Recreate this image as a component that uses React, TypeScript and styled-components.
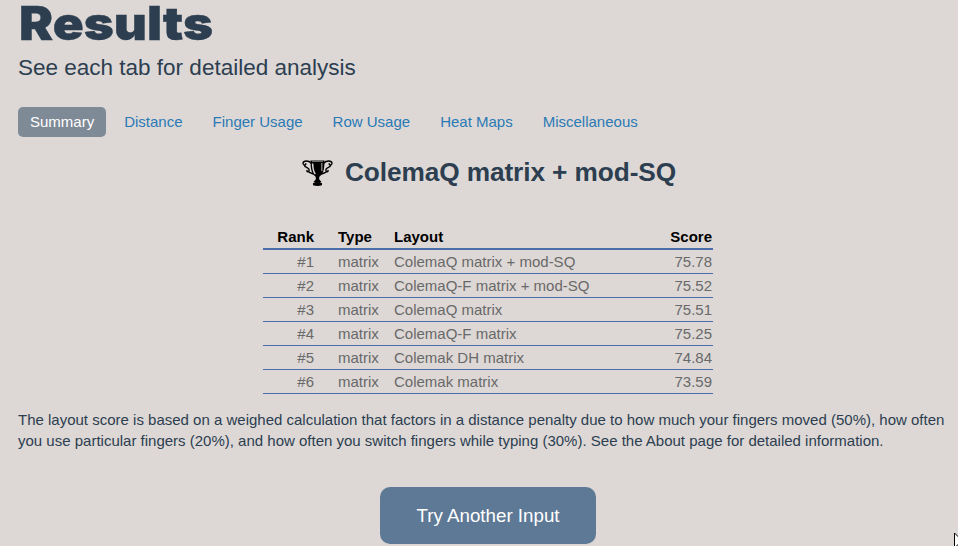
import React from "react";
import styled, { createGlobalStyle } from "styled-components";

const GlobalStyle = createGlobalStyle`
  * { box-sizing: border-box; }
  body {
    margin: 0;
    overflow: hidden;
    background: #ddd8d6;
    color: #2c3e50;
    font: 15px/21px "Liberation Sans", Arial, sans-serif;
  }
`;

const Page = styled.main`
  position: relative;
  width: 958px;
  height: 546px;
  padding: 0 10px 0 18px;
`;

const Title = styled.h1`
  width: max-content;
  margin: 0 0 0 1px;
  height: 48px;
  font-family: Inter, "Liberation Sans", sans-serif;
  font-size: 46.5px;
  font-weight: 900;
  line-height: 46px;
  transform: scaleX(1.1);
  transform-origin: left;
  -webkit-text-stroke: 0.4px #2c3e50;
`;

const Subtitle = styled.p`
  margin: 0;
  height: 59px;
  font-size: 22.5px;
  line-height: 40px;
`;

const Tabs = styled.nav`
  display: flex;
  gap: 6px;
`;

const Tab = styled.a<{ $active?: boolean }>`
  height: 30px;
  padding: 0 12px;
  border-radius: 5px;
  line-height: 30px;
  white-space: nowrap;
  color: ${(p) => (p.$active ? "#ffffff" : "#2a7ab5")};
  background: ${(p) => (p.$active ? "#7f8a97" : "transparent")};
`;

const Winner = styled.h2`
  display: flex;
  align-items: center;
  gap: 12px;
  height: 36px;
  margin: 17px 0 34px;
  padding-left: 284px;
  font-size: 26.25px;
  line-height: 36px;
  letter-spacing: -0.1px;
  white-space: nowrap;
`;

const TrophyIcon = styled.svg`
  width: 31px;
  height: 28px;
  margin-top: 2px;
`;

const ScoreTable = styled.table`
  width: 450px;
  margin: 0 0 0 245px;
  border-collapse: separate;
  border-spacing: 0;
  table-layout: fixed;
`;

const HeadCell = styled.th<{ $right?: boolean; $width: number }>`
  width: ${(p) => p.$width}px;
  height: 26px;
  padding: 1px 1px 0 0;
  border-bottom: 2px solid #4a6ea9;
  color: #000;
  line-height: 23px;
  vertical-align: bottom;
  text-align: ${(p) => (p.$right ? "right" : "left")};
`;

const Cell = styled.td<{ $right?: boolean }>`
  height: 24px;
  padding: 0 1px 0 0;
  border-bottom: 1px solid #4a6ea9;
  color: #696969;
  line-height: 23px;
  white-space: nowrap;
  text-align: ${(p) => (p.$right ? "right" : "left")};
`;

const TypeLabel = styled.span`
  padding-left: 23px;
`;

const Note = styled.p`
  margin: 15px 0 36px;
`;

const Button = styled.button`
  display: block;
  width: 216px;
  height: 57px;
  margin: 0 auto 0 362px;
  padding: 0;
  border: 0;
  border-radius: 10px;
  background: #5e7995;
  color: #fff;
  font: 18.75px "Liberation Sans", Arial, sans-serif;
`;

const Pointer = styled.svg`
  position: absolute;
  left: 954px;
  top: 532px;
  width: 4px;
  height: 14px;
`;

const tabs = ["Summary", "Distance", "Finger Usage", "Row Usage", "Heat Maps", "Miscellaneous"];

const rows = [
  ["ColemaQ matrix + mod-SQ", "75.78"],
  ["ColemaQ-F matrix + mod-SQ", "75.52"],
  ["ColemaQ matrix", "75.51"],
  ["ColemaQ-F matrix", "75.25"],
  ["Colemak DH matrix", "74.84"],
  ["Colemak matrix", "73.59"],
];

function Trophy() {
  return (
    <TrophyIcon viewBox="0 0 31 28" aria-hidden="true">
      <g fill="none" stroke="#000" strokeWidth="1.4" strokeLinecap="round">
        <path d="M9 4C7 1.500 1.500 1 1 4.200C.8 6 3.500 6.800 3.800 4.800M2.200 6C3 9 7 8.500 7.200 11C7.200 13 4.500 13.500 5 11.500M7 13C8 14 10 14.200 11.500 15" />
        <path d="M22 4C24 1.500 29.500 1 30 4.200C30.200 6 27.500 6.800 27.200 4.800M28.800 6C28 9 24 8.500 23.800 11C23.800 13 26.500 13.500 26 11.500M24 13C23 14 21 14.200 19.500 15" />
      </g>
      <path d="M8.500 1.500H22.500C22.500 8 22 15 17.500 17.500L17 20L19.500 23H11.500L14 20L13.500 17.500C9 15 8.500 8 8.500 1.500Z" fill="#000" />
      <path d="M10 2.300H21" stroke="#a9a5a4" strokeWidth=".8" />
      <path d="M10.600 4.500C10.800 10 11.500 13 13.300 15" fill="none" stroke="#ddd8d6" strokeWidth="1.500" />
      <path d="M19.800 4V12" fill="none" stroke="#8f8c8b" strokeWidth="1.300" />
      <path d="M11 24.200Q15.500 21.500 20 24.200V26.300Q15.500 27.700 11 26.300Z" fill="#000" />
    </TrophyIcon>
  );
}

export default function App() {
  return (
    <>
      <GlobalStyle />
      <Page>
        <Title>Results</Title>
        <Subtitle>See each tab for detailed analysis</Subtitle>
        <Tabs>
          {tabs.map((t, i) => (
            <Tab key={t} $active={i === 0}>{t}</Tab>
          ))}
        </Tabs>
        <Winner>
          <Trophy />
          <span>ColemaQ matrix + mod-SQ</span>
        </Winner>
        <ScoreTable>
          <thead>
            <tr>
              <HeadCell $width={52} $right>Rank</HeadCell>
              <HeadCell $width={79}><TypeLabel>Type</TypeLabel></HeadCell>
              <HeadCell $width={219}>Layout</HeadCell>
              <HeadCell $width={100} $right>Score</HeadCell>
            </tr>
          </thead>
          <tbody>
            {rows.map(([name, score], i) => (
              <tr key={name}>
                <Cell $right>#{i + 1}</Cell>
                <Cell><TypeLabel>matrix</TypeLabel></Cell>
                <Cell>{name}</Cell>
                <Cell $right>{score}</Cell>
              </tr>
            ))}
          </tbody>
        </ScoreTable>
        <Note>
          The layout score is based on a weighed calculation that factors in a distance penalty due to how much your fingers moved (50%), how often you use particular fingers (20%), and how often you switch fingers while typing (30%). See the About page for detailed information.
        </Note>
        <Button>Try Another Input</Button>
        <Pointer viewBox="0 0 4 14" aria-hidden="true">
          <path d="M.5 1V16L4 12.500L6.500 18L9 17L6.500 11.500H11Z" fill="#fff" stroke="#000" />
        </Pointer>
      </Page>
    </>
  );
}
